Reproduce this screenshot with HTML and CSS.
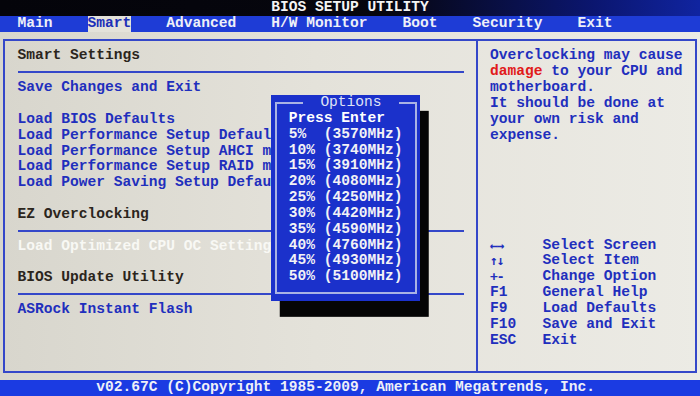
FILE: index.html
```html
<!DOCTYPE html>
<html lang="en">
<head>
    <meta charset="UTF-8">
    <meta name="viewport" content="width=device-width, initial-scale=1.0">
    <title>BIOS SETUP UTILITY</title>
    <link rel="stylesheet" href="styles.css">
</head>
<body>

    <div class="screen">
        <div class="title">BIOS SETUP UTILITY</div>

        <div class="tabs">
            <span class="tab">Main</span>
            <span class="tab active">Smart</span>
            <span class="tab">Advanced</span>
            <span class="tab">H/W Monitor</span>
            <span class="tab">Boot</span>
            <span class="tab">Security</span>
            <span class="tab">Exit</span>
        </div>

        <div class="main">
            <div class="frame">
                <div class="left">
                    <div class="group">
                        <div class="head">Smart Settings</div>
                        <div class="rule"></div>
                        <div class="item">Save Changes and Exit</div>
                        <div class="item break">Load BIOS Defaults</div>
                        <div class="item">Load Performance Setup Default</div>
                        <div class="item">Load Performance Setup AHCI mode</div>
                        <div class="item">Load Performance Setup RAID mode</div>
                        <div class="item">Load Power Saving Setup Default</div>
                    </div>
                    <div class="group">
                        <div class="head">EZ Overclocking</div>
                        <div class="rule"></div>
                        <div class="item current">Load Optimized CPU OC Setting</div>
                    </div>
                    <div class="group">
                        <div class="head">BIOS Update Utility</div>
                        <div class="rule"></div>
                        <div class="item">ASRock Instant Flash</div>
                    </div>
                </div>

                <div class="right">
                    <div class="help">
                        Overclocking may cause<br>
                        <span class="warn">damage</span> to your CPU and<br>
                        motherboard.<br>
                        It should be done at<br>
                        your own risk and<br>
                        expense.
                    </div>
                    <div class="keys">
                        <span class="arrow">&larr;&rarr;</span><span>Select Screen</span>
                        <span class="arrow">&uarr;&darr;</span><span>Select Item</span>
                        <span class="arrow">+-</span><span>Change Option</span>
                        <span>F1</span><span>General Help</span>
                        <span>F9</span><span>Load Defaults</span>
                        <span>F10</span><span>Save and Exit</span>
                        <span>ESC</span><span>Exit</span>
                    </div>
                </div>
            </div>

            <div class="popup">
                <div class="popup-box">
                    <div class="popup-title">Options</div>
                    <div class="popup-hint">Press Enter</div>
                    <div class="opt">5%  (3570MHz)</div>
                    <div class="opt">10% (3740MHz)</div>
                    <div class="opt">15% (3910MHz)</div>
                    <div class="opt">20% (4080MHz)</div>
                    <div class="opt">25% (4250MHz)</div>
                    <div class="opt">30% (4420MHz)</div>
                    <div class="opt">35% (4590MHz)</div>
                    <div class="opt">40% (4760MHz)</div>
                    <div class="opt">45% (4930MHz)</div>
                    <div class="opt">50% (5100MHz)</div>
                </div>
            </div>
        </div>

        <div class="footer">v02.67C (C)Copyright 1985-2009, American Megatrends, Inc.</div>
    </div>

</body>
</html>
```

FILE: styles.css
```css
/* text grid: 80 columns x 25 rows */
:root { --cw: 8.75px; --rh: 15.84px; --line: #3447c9; --ink: #1f2fbd; }
* { margin: 0; padding: 0; box-sizing: border-box; }
body { background: #e2e0d8; font-family: "Liberation Mono", "DejaVu Sans Mono", monospace; font-weight: bold; font-size: 14.58px; line-height: var(--rh); white-space: nowrap; overflow: hidden; }
.screen { width: 700px; height: calc(var(--rh) * 25); display: flex; flex-direction: column; background: linear-gradient(90deg, #d8d6cd, #e4e2da 45%, #ecebe5); }

.title { height: var(--rh); color: #f4f4f4; text-align: center; background: linear-gradient(90deg, #04040a 0%, #06060e 55%, #0b1670 85%, #1024a0 100%); }
.tabs { height: var(--rh); display: flex; gap: calc(var(--cw) * 4); padding-left: calc(var(--cw) * 2); background: #1e3cd6; color: #eef0f8; }
.tab.active { background: #e4e2da; color: #1d2fb8; }

.main { position: relative; height: calc(var(--rh) * 22); padding: calc(var(--rh) / 2 - 1px) calc(var(--cw) / 2 - 1px); }
.frame { height: 100%; border: 2px solid var(--line); display: grid; grid-template-columns: 470.5px 1fr; }
.left { padding: calc(var(--rh) / 2) 0 0 calc(var(--cw) * 1.5 - 1px); overflow: hidden; }
.right { border-left: 2px solid var(--line); padding: calc(var(--rh) / 2) 0 0 calc(var(--cw) * 1.5 - 1px); color: var(--ink); }

.group + .group { margin-top: var(--rh); }
.head { color: #2b251c; }
.rule { height: var(--rh); width: calc(var(--cw) * 51); background: linear-gradient(var(--line), var(--line)) center / 100% 2px no-repeat; }
.item { color: var(--ink); }
.item.break { margin-top: var(--rh); }
.item.current { color: #f8f8f4; }

.warn { color: #e11a1a; }
.keys { margin-top: calc(var(--rh) * 6 - 1px); display: grid; grid-template-columns: calc(var(--cw) * 6) 1fr; }
.arrow { font-family: "DejaVu Sans Mono", monospace; font-size: 13px; letter-spacing: -1px; }

.popup { position: absolute; left: calc(var(--cw) * 31); top: calc(var(--rh) * 4); width: calc(var(--cw) * 17); height: calc(var(--rh) * 13); background: #1b31cb; box-shadow: var(--cw) var(--rh) 0 #050505; padding: calc(var(--rh) / 2 - 1px) calc(var(--cw) / 2 - 1px); color: #f2f2f6; }
.popup-box { height: 100%; border: 2px solid #a9b3e4; padding-left: calc(var(--cw) * 1.5 - 1px); }
.popup-title { width: calc(var(--cw) * 11); height: var(--rh); margin: calc(var(--rh) / -2 - 1px) 0 0 calc(var(--cw) * 1.5 + 1px); background: #1b31cb; text-align: center; color: #dfe3f6; font-weight: normal; }
.popup-hint { color: #ffffff; }
.opt { white-space: pre; }

.footer { height: var(--rh); background: #1b3be2; color: #eef0f8; padding-left: calc(var(--cw) * 11); }
```
